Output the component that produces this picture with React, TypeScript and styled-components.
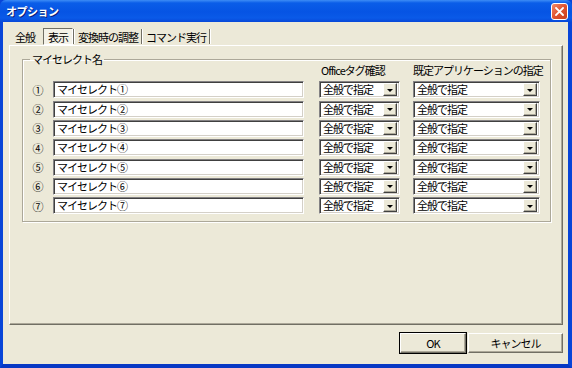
import React from 'react';
import styled, { createGlobalStyle } from 'styled-components';

const GlobalStyle = createGlobalStyle`
  html, body {
    margin: 0;
    padding: 0;
    background: #ece9d8;
  }
  body {
    font-family: "Noto Sans CJK JP", "Liberation Sans", sans-serif;
  }
`;

const FONT = `"Noto Sans CJK JP", "Liberation Sans", sans-serif`;

const Window = styled.div`
  width: 572px;
  height: 368px;
  box-sizing: border-box;
  display: flex;
  flex-direction: column;
  background: #0a4fe0;
  border-left: 3px solid #0845d8;
  border-right: 4px solid #0845d8;
  border-bottom: 4px solid #0738c4;
`;

const TitleBar = styled.div`
  height: 22px;
  margin: 0 -4px 0 -3px;
  display: flex;
  align-items: center;
  justify-content: space-between;
  padding: 0 4px 0 6px;
  background: linear-gradient(to bottom, #3d8cf6 0, #0a5de8 3px, #0654e4 12px, #0a5ae8 18px, #0848d8 22px);
  border-radius: 6px 6px 0 0;
`;

const TitleText = styled.span`
  color: #fff;
  font-family: ${FONT};
  font-weight: bold;
  font-size: 11px;
  letter-spacing: -0.5px;
  text-shadow: 1px 1px 0 #0a1f7a;
`;

const CloseButton = styled.div`
  width: 17px;
  height: 17px;
  box-sizing: border-box;
  border: 1px solid #fff;
  border-radius: 3px;
  background: linear-gradient(135deg, #ef8a6a 0, #e0532f 50%, #c8401e 100%);
  display: flex;
  align-items: center;
  justify-content: center;
`;

const Body = styled.div`
  flex: 1;
  display: flex;
  flex-direction: column;
  background: #ece9d8;
  padding: 6px 5px 0 6px;
  font-family: ${FONT};
  font-size: 11px;
  letter-spacing: -1px;
  color: #000;
`;

const TabStrip = styled.div`
  height: 17px;
  display: flex;
  align-items: stretch;
  padding-left: 3px;
`;

const Tab = styled.div<{ active?: boolean }>`
  display: flex;
  align-items: center;
  padding: 0 ${p => (p.active ? 4 : 2)}px;
  margin-left: ${p => (p.active ? 5 : 0)}px;
  box-sizing: border-box;
  border: 1px solid transparent;
  ${p => p.active && `
    border-color: #716f64 #fff #fff #716f64;
    background: #f4f2e8;
  `}
`;

const TabSep = styled.div`
  width: 1px;
  margin: 1px 0;
  background: #716f64;
  border-right: 1px solid #fff;
`;

const Panel = styled.div`
  height: 280px;
  box-sizing: border-box;
  border-top: 1px solid #fff;
  border-left: 1px solid #fff;
  border-right: 1px solid #716f64;
  border-bottom: 1px solid #716f64;
  box-shadow: inset -1px -1px 0 #aca899;
  padding: 7px 11px 0 12px;
`;

const Group = styled.fieldset`
  margin: 0;
  padding: 0 0 7px 7px;
  border: 1px solid #aca899;
  box-shadow: 1px 1px 0 #fff, inset 1px 1px 0 #fff;
  min-width: 0;
`;

const Legend = styled.legend`
  padding: 0 2px;
  font-size: 11px;
  line-height: 12px;
`;

const Grid = styled.div`
  display: grid;
  grid-template-columns: 23px 266px 94px 127px;
  grid-template-rows: 14px;
  grid-auto-rows: 17px;
  row-gap: 2.33px;
  align-items: center;
`;

const HeaderCell = styled.div<{ indent?: number }>`
  line-height: 12px;
  height: 12px;
  margin-top: -1px;
  padding-left: ${p => p.indent ?? 0}px;
  white-space: nowrap;
  align-self: start;
`;

const HeaderRow = styled.div`
  display: contents;
`;

const Num = styled.div`
  width: 16px;
  text-align: center;
  font-size: 11px;
  letter-spacing: 0;
`;

const sunken = `
  box-sizing: border-box;
  height: 17px;
  background: #fff;
  border-top: 1px solid #848284;
  border-left: 1px solid #848284;
  border-right: 1px solid #fff;
  border-bottom: 1px solid #fff;
  box-shadow: inset 1px 1px 0 #404040, inset -1px -1px 0 #d4d0c8;
`;

const TextField = styled.div`
  ${sunken}
  width: 251px;
  padding: 0 3px;
  line-height: 15px;
  white-space: nowrap;
`;

const Combo = styled.div<{ w: number }>`
  ${sunken}
  width: ${p => p.w}px;
  display: flex;
  align-items: center;
  padding: 2px 2px 2px 3px;
  line-height: 13px;
`;

const ComboText = styled.span`
  flex: 1;
  white-space: nowrap;
`;

const DropButton = styled.div`
  width: 14px;
  height: 13px;
  box-sizing: border-box;
  background: #ece9d8;
  border-top: 1px solid #fff;
  border-left: 1px solid #fff;
  border-right: 1px solid #404040;
  border-bottom: 1px solid #404040;
  box-shadow: inset -1px -1px 0 #aca899;
  display: flex;
  align-items: center;
  justify-content: center;
`;

const Arrow = styled.div`
  width: 0;
  height: 0;
  border-left: 3px solid transparent;
  border-right: 3px solid transparent;
  border-top: 3px solid #000;
  margin-top: 1px;
`;

const Footer = styled.div`
  display: flex;
  justify-content: flex-end;
  gap: 2px;
  margin-top: 8px;
`;

const Button = styled.div<{ w: number; isDefault?: boolean }>`
  width: ${p => p.w}px;
  height: 20px;
  box-sizing: border-box;
  display: flex;
  align-items: center;
  justify-content: center;
  background: #ece9d8;
  border-top: 1px solid #fff;
  border-left: 1px solid #fff;
  border-right: 1px solid #716f64;
  border-bottom: 1px solid #716f64;
  box-shadow: inset -1px -1px 0 #aca899;
  ${p => p.isDefault && 'outline: 1px solid #000;'}
`;

const nums = ['①', '②', '③', '④', '⑤', '⑥', '⑦'];

export default function App() {
  return (
    <>
      <GlobalStyle />
      <Window>
        <TitleBar>
          <TitleText>オプション</TitleText>
          <CloseButton>
            <svg width="9" height="9" viewBox="0 0 9 9">
              <path d="M1 1L8 8M8 1L1 8" stroke="#fff" strokeWidth="1.8" strokeLinecap="square" />
            </svg>
          </CloseButton>
        </TitleBar>
        <Body>
          <TabStrip>
            <Tab>全般</Tab>
            <Tab active>表示</Tab>
            <TabSep />
            <Tab>変換時の調整</Tab>
            <TabSep />
            <Tab>コマンド実行</Tab>
            <TabSep />
          </TabStrip>
          <Panel>
            <Group>
              <Legend>マイセレクト名</Legend>
              <Grid>
                <HeaderRow>
                  <HeaderCell />
                  <HeaderCell />
                  <HeaderCell indent={2}>Officeタグ確認</HeaderCell>
                  <HeaderCell>既定アプリケーションの指定</HeaderCell>
                </HeaderRow>
                {nums.map(n => (
                  <React.Fragment key={n}>
                    <Num>{n}</Num>
                    <TextField>マイセレクト{n}</TextField>
                    <Combo w={81}>
                      <ComboText>全般で指定</ComboText>
                      <DropButton><Arrow /></DropButton>
                    </Combo>
                    <Combo w={127}>
                      <ComboText>全般で指定</ComboText>
                      <DropButton><Arrow /></DropButton>
                    </Combo>
                  </React.Fragment>
                ))}
              </Grid>
            </Group>
          </Panel>
          <Footer>
            <Button w={66} isDefault>OK</Button>
            <Button w={95}>キャンセル</Button>
          </Footer>
        </Body>
      </Window>
    </>
  );
}
